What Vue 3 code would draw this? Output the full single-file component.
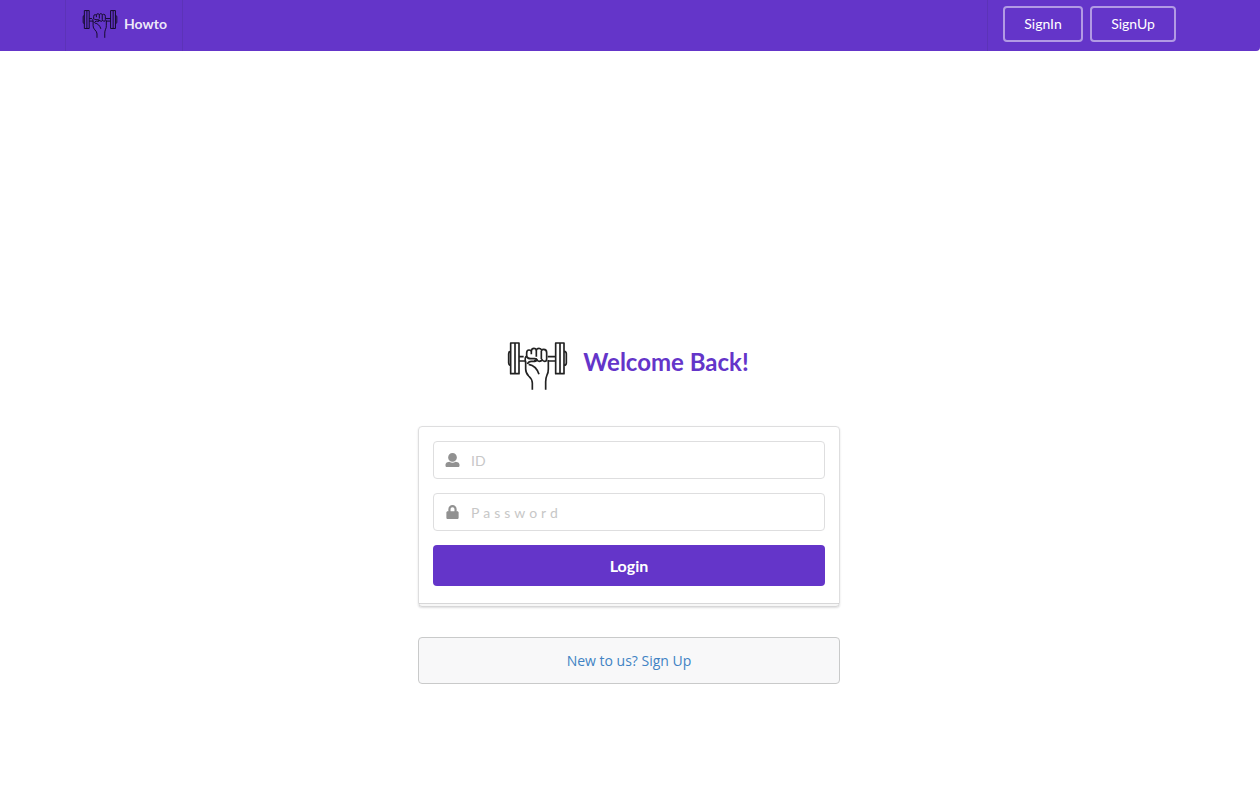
<script setup>
import { defineComponent, h, ref } from 'vue'

const id = ref('')
const password = ref('')

const strokes = [
  // plates
  'M30 24h25v92h-25z M43 24v92 M30 48q-6 2-6 8v28q0 6 6 8',
  'M165 24h25v92h-25z M178 24v92 M190 48q7 2 7 8v28q0 6-7 8',
  // bar
  'M55 65h14 M55 78h20 M141 65h24 M141 78h24',
  // knuckles and fingers
  'M78 63v-9q0-9 7-9q4 0 7 3q1-8 8-8q5 0 7 5q2-5 8-5q6 0 8 6q2-3 6-3q9 0 9 10v18q0 8-6 8q-5 0-8-5q-2 5-8 5q-5 0-8-6q-2 4-8 4',
  'M92 48v10 M107 45v20 M122 47v25',
  // thumb
  'M75 82q-4-16 3-18q3 7 12 7h12q6 0 6 4t-6 4h-10q-8 0-12 8',
  // palm crease
  'M84 88q23 4 31 30',
  // wrist
  'M75 80v22q0 12 9 21q11 10 11 21v20 M143 75v27q0 12-4 18q-4 9-4 20v24',
]

const DumbbellLogo = defineComponent({
  setup: () => () =>
    h('svg', { viewBox: '21 21 179 144', 'aria-hidden': 'true', fill: 'none', stroke: 'currentColor', 'stroke-linejoin': 'round' },
      strokes.map((d) => h('path', { d }))),
})
</script>

<template>
  <div class="page">
    <header class="bar">
      <nav class="bar-inner">
        <a class="brand" href="#"><DumbbellLogo class="brand-logo" />Howto</a>
        <div class="actions">
          <button type="button" class="outline">SignIn</button>
          <button type="button" class="outline">SignUp</button>
        </div>
      </nav>
    </header>

    <main class="login">
      <h1 class="title"><DumbbellLogo class="title-logo" /><span class="title-text">Welcome Back!</span></h1>

      <form class="card" @submit.prevent>
        <div class="field">
          <svg class="icon" viewBox="0 0 512 512" aria-hidden="true"><path d="M256 0c88.366 0 160 71.634 160 160s-71.634 160-160 160S96 248.366 96 160 167.634 0 256 0zm183.283 333.821l-71.313-17.828c-74.923 53.89-165.738 41.864-223.94 0l-71.313 17.828C29.981 344.505 0 382.903 0 426.955V464c0 26.51 21.49 48 48 48h416c26.51 0 48-21.49 48-48v-37.045c0-44.052-29.981-82.45-72.717-93.134z" /></svg>
          <input v-model="id" type="text" placeholder="ID" aria-label="ID" />
        </div>
        <div class="field">
          <svg class="icon" viewBox="0 0 448 512" aria-hidden="true"><path d="M400 224h-24v-72C376 68.2 307.8 0 224 0S72 68.2 72 152v72H48c-26.5 0-48 21.5-48 48v192c0 26.5 21.5 48 48 48h352c26.5 0 48-21.5 48-48V272c0-26.5-21.5-48-48-48zm-104 0H152v-72c0-39.7 32.3-72 72-72s72 32.3 72 72v72z" /></svg>
          <input v-model="password" class="secret" type="password" placeholder="Password" aria-label="Password" />
        </div>
        <button type="submit" class="submit">Login</button>
      </form>

      <div class="message"><a href="#">New to us? Sign Up</a></div>
    </main>
  </div>
</template>

<style>
body {
  margin: 0;
  background: #fff;
}
</style>

<style scoped>
.page,
.page * {
  box-sizing: border-box;
}

.page {
  font-family: Lato, "Liberation Sans", sans-serif;
  font-size: 14px;
  line-height: 18px;
}

button,
input {
  font-family: inherit;
}

.bar {
  background: #6435c9;
  border-radius: 0 0 4px 0;
}

.bar-inner {
  display: flex;
  justify-content: space-between;
  max-width: 1130px;
  height: 51px;
  margin: 0 auto;
  border-left: 1px solid rgba(34, 36, 38, 0.1);
}

.brand {
  display: flex;
  align-items: center;
  gap: 6px;
  padding: 0 15px 3px 16px;
  border-right: 1px solid rgba(34, 36, 38, 0.1);
  color: rgba(255, 255, 255, 0.9);
  font-weight: 700;
  text-decoration: none;
}

.brand-logo {
  width: 36px;
  height: 28px;
  color: #130a28;
  stroke-width: 5;
}

.actions {
  display: flex;
  align-items: center;
  gap: 7px;
  padding: 0 19px 3px 15px;
  border-left: 1px solid rgba(34, 36, 38, 0.1);
}

.outline {
  min-width: 80px;
  height: 36px;
  padding: 0 18px 2px;
  border: 2px solid rgba(255, 255, 255, 0.5);
  border-radius: 4px;
  background: transparent;
  color: #fff;
  font-size: 14px;
}

.outline + .outline {
  min-width: 86px;
}

.login {
  width: 100%;
  max-width: 424px;
  margin: 0 auto;
  padding: 291px 2px 0 0;
}

.title {
  display: flex;
  align-items: center;
  justify-content: center;
  gap: 15px;
  margin: 0 0 36px;
  padding-right: 2px;
  color: #6435c9;
  font-size: 24px;
  line-height: 32px;
  font-weight: 700;
}

.title-text {
  padding-bottom: 8px;
}

.title-logo {
  width: 61px;
  height: 48px;
  color: #222;
  stroke-width: 5;
}

.card {
  position: relative;
  padding: 14px 14px 20px;
  border: 1px solid #dededf;
  border-radius: 4px;
  box-shadow: 0 1px 2px rgba(34, 36, 38, 0.15);
}

.card::after {
  content: "";
  position: absolute;
  left: 0;
  right: 0;
  bottom: -1px;
  height: 3px;
  border-top: 1px solid rgba(34, 36, 38, 0.15);
  background: rgba(0, 0, 0, 0.03);
}

.field {
  display: flex;
  align-items: center;
  gap: 11px;
  height: 38px;
  margin-bottom: 14px;
  padding: 0 12px 0 11px;
  border: 1px solid #dededf;
  border-radius: 4px;
}

.field:focus-within {
  border-color: #85b7d9;
}

.icon {
  flex: none;
  width: 15px;
  height: 14px;
  fill: #919191;
}

.field input {
  flex: 1;
  min-width: 0;
  height: 34px;
  padding: 0;
  border: 0;
  outline: 0;
  background: transparent;
  color: #333;
  font-size: 14px;
}

.field input::placeholder {
  color: #c7c7c7;
  opacity: 1;
}

.field .secret {
  letter-spacing: 4px;
}

.submit {
  display: block;
  width: 100%;
  height: 41px;
  border: 0;
  border-radius: 4px;
  background: #6435c9;
  color: #fff;
  font-size: 16px;
  font-weight: 700;
}

.message {
  margin-top: 30px;
  padding: 14px 14px 13px;
  border: 1px solid #c9caca;
  border-radius: 4px;
  background: #f8f8f9;
  text-align: center;
  font-family: "Open Sans", "Noto Sans", sans-serif;
  font-size: 14px;
}

.message a {
  color: #4183c4;
  text-decoration: none;
}
</style>
